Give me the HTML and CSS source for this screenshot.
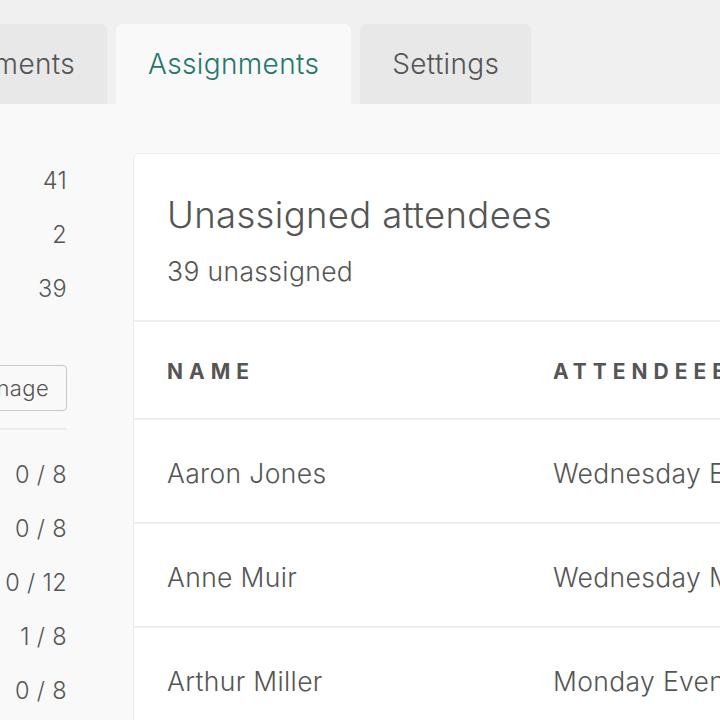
FILE: index.html
```html
<!DOCTYPE html>
<html lang="en">
<head>
<meta charset="utf-8">
<title>Assignments</title>
<link rel="stylesheet" href="styles.css">
</head>
<body>
<div class="page">
  <nav class="tabbar">
    <div class="tabs">
      <a class="tab">Enrolments</a>
      <a class="tab tab-active">Assignments</a>
      <a class="tab">Settings</a>
    </div>
  </nav>
  <main class="layout">
    <aside class="sidebar">
      <ul class="stats">
        <li class="stat"><span class="stat-label">Attendees</span><span class="stat-value">41</span></li>
        <li class="stat"><span class="stat-label">Assigned</span><span class="stat-value">2</span></li>
        <li class="stat"><span class="stat-label">Unassigned</span><span class="stat-value">39</span></li>
      </ul>
      <div class="manage-row"><button class="btn">Manage</button></div>
      <hr class="rule">
      <ul class="stats">
        <li class="stat"><span class="stat-label">Group A</span><span class="stat-value">0 / 8</span></li>
        <li class="stat"><span class="stat-label">Group B</span><span class="stat-value">0 / 8</span></li>
        <li class="stat"><span class="stat-label">Group C</span><span class="stat-value">0 / 12</span></li>
        <li class="stat"><span class="stat-label">Group D</span><span class="stat-value">1 / 8</span></li>
        <li class="stat"><span class="stat-label">Group E</span><span class="stat-value">0 / 8</span></li>
      </ul>
    </aside>
    <section class="card">
      <header class="card-head">
        <h1 class="card-title">Unassigned attendees</h1>
        <p class="card-sub">39 unassigned</p>
      </header>
      <div class="table">
        <div class="row row-head">
          <div class="cell">Name</div>
          <div class="cell">Attendeee session</div>
        </div>
        <div class="row">
          <div class="cell">Aaron Jones</div>
          <div class="cell">Wednesday Evening</div>
        </div>
        <div class="row">
          <div class="cell">Anne Muir</div>
          <div class="cell">Wednesday Morning</div>
        </div>
        <div class="row">
          <div class="cell">Arthur Miller</div>
          <div class="cell">Monday Evening</div>
        </div>
      </div>
    </section>
  </main>
</div>
</body>
</html>
```
FILE: styles.css
```css
* { box-sizing: border-box; }
html, body {
  margin: 0;
  padding: 0;
  background: #f9f9f9;
  overflow: hidden;
}
body {
  font-family: Inter, "Noto Sans", sans-serif;
  font-weight: 350;
  letter-spacing: 0.35px;
  color: #555555;
  width: 720px;
  height: 720px;
}
.page {
  width: 720px;
  overflow: hidden;
}
.tabbar {
  background: #f0f0f0;
  height: 104px;
  padding-top: 24px;
}
.tabs {
  display: flex;
  gap: 9px;
  margin-left: -106px;
  height: 80px;
}
.tab {
  flex: 0 0 auto;
  display: flex;
  align-items: center;
  padding: 0 32px;
  background: #e8e8e8;
  border-radius: 6px 6px 0 0;
  font-size: 28px;
  color: #555555;
  white-space: nowrap;
}
.tab-active {
  background: #f9f9f9;
  color: #21786a;
}
.layout {
  display: flex;
  gap: 66px;
  margin-left: -233px;
  padding-top: 49px;
}
.sidebar {
  flex: 0 0 300px;
}
.stats {
  list-style: none;
  margin: 0;
  padding: 0;
}
.stat {
  display: flex;
  justify-content: space-between;
  align-items: center;
  height: 54px;
  font-size: 23.5px;
}
.manage-row {
  display: flex;
  justify-content: flex-end;
  margin-top: 50px;
}
.btn {
  height: 46px;
  padding: 0 17px;
  border: 1.5px solid #c8c8c8;
  border-radius: 4px;
  background: #f9f9f9;
  font-family: inherit;
  font-weight: inherit;
  letter-spacing: inherit;
  font-size: 22px;
  color: #555555;
}
.rule {
  border: 0;
  border-top: 2px solid #ebebeb;
  margin: 17px 0 17px;
}
.card {
  flex: 0 0 900px;
  background: #ffffff;
  border: 1.5px solid #ebebeb;
  border-radius: 6px;
}
.card-head {
  padding: 40px 33px 32px;
  border-bottom: 2px solid #eeeeee;
}
.card-title {
  margin: 0;
  font-size: 36.5px;
  font-weight: 350;
  line-height: 42px;
}
.card-sub {
  margin: 18px 0 0;
  font-size: 26.5px;
  line-height: 34px;
}
.row {
  display: grid;
  grid-template-columns: 386px 1fr;
  align-items: center;
  height: 104px;
  padding-left: 33px;
  padding-top: 4px;
  border-bottom: 2px solid #eeeeee;
  font-size: 26.5px;
}
.row-head {
  height: 98px;
  padding-top: 2px;
  font-size: 21px;
  font-weight: 700;
  letter-spacing: 6px;
  text-transform: uppercase;
}
.cell {
  white-space: nowrap;
}
```
